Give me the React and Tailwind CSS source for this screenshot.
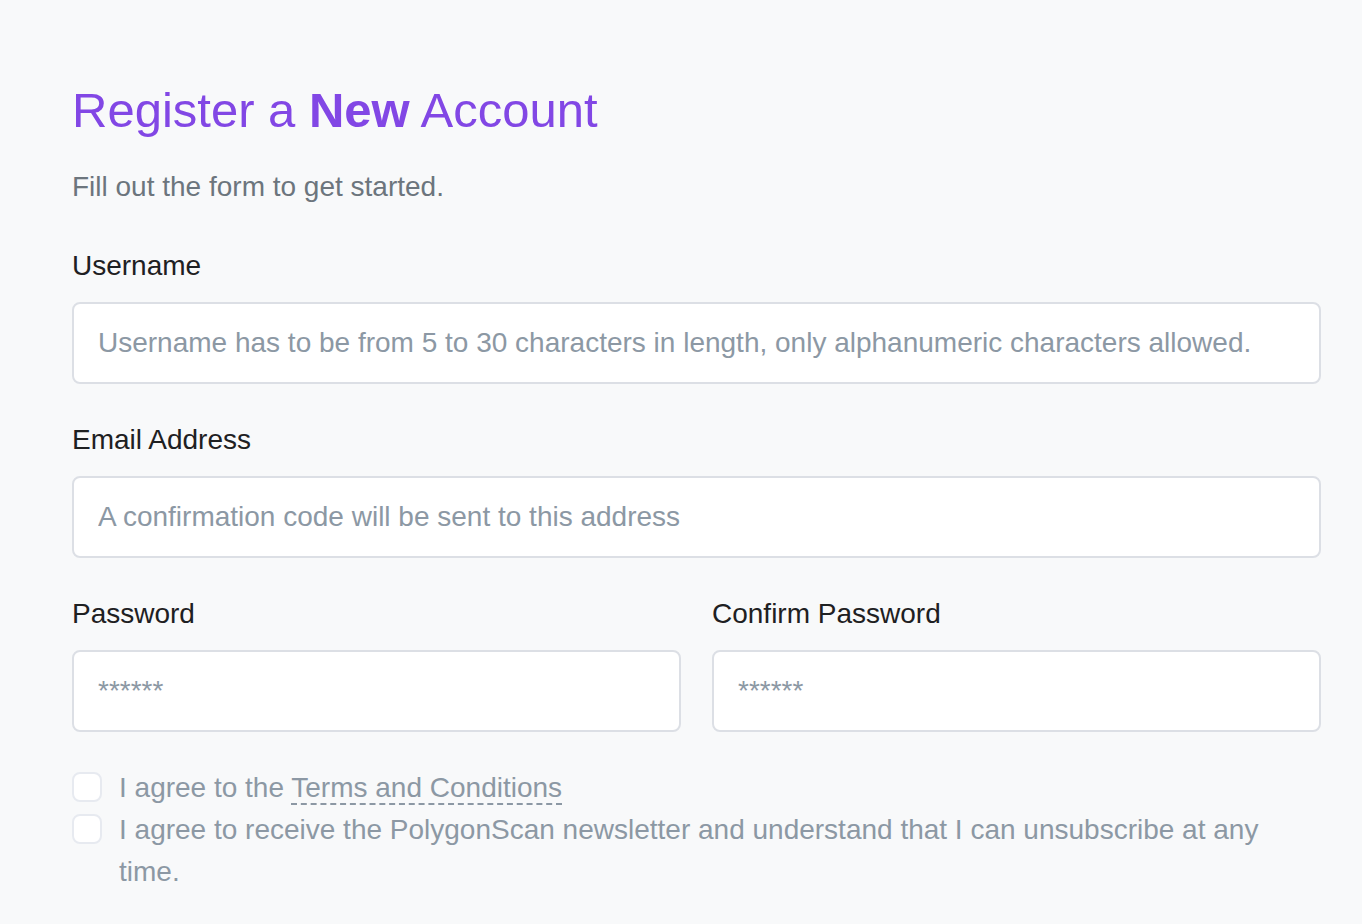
import React from 'react';

const Field = ({ label, placeholder, type = 'text' }) => (
  <div className="flex flex-col">
    <label className="text-[28px] leading-[32px] text-[#1e2022] mb-[20px]">{label}</label>
    <input
      type={type}
      placeholder={placeholder}
      className="h-[82px] w-full rounded-[8px] border-2 border-[#dcdfe5] bg-white px-[24px] text-[28px] text-[#1e2022] placeholder:text-[#8c98a4] outline-none"
    />
  </div>
);

const Check = ({ children }) => (
  <label className="flex items-start gap-[17px] text-[28px] leading-[42px] text-[#8c98a4]">
    <span className="mt-[5px] h-[30px] w-[30px] shrink-0 rounded-[8px] border-2 border-[#e7eaf0] bg-white" />
    <span>{children}</span>
  </label>
);

const App = () => {
  return (
    <div className="min-h-screen bg-[#f8f9fa] font-['Liberation_Sans',Arial,sans-serif]">
      <div className="ml-[72px] w-[1249px] pt-[80px]">
        <h1 className="text-[49px] leading-[60px] text-[#8247e5]">
          Register a <span className="font-bold">New</span> Account
        </h1>
        <p className="mt-[30px] text-[28px] leading-[34px] text-[#6c757d]">Fill out the form to get started.</p>

        <div className="mt-[46px] flex flex-col gap-[40px]">
          <Field
            label="Username"
            placeholder="Username has to be from 5 to 30 characters in length, only alphanumeric characters allowed."
          />
          <Field label="Email Address" placeholder="A confirmation code will be sent to this address" />
          <div className="grid grid-cols-2 gap-[31px]">
            <Field label="Password" placeholder="******" type="password" />
            <Field label="Confirm Password" placeholder="******" type="password" />
          </div>
        </div>

        <div className="mt-[35px] flex flex-col">
          <Check>
            I agree to the{' '}
            <span className="border-b-2 border-dashed border-[#8c98a4]">Terms and Conditions</span>
          </Check>
          <Check>
            I agree to receive the PolygonScan newsletter and understand that I can unsubscribe at any time.
          </Check>
        </div>
      </div>
    </div>
  );
};

export default App;
